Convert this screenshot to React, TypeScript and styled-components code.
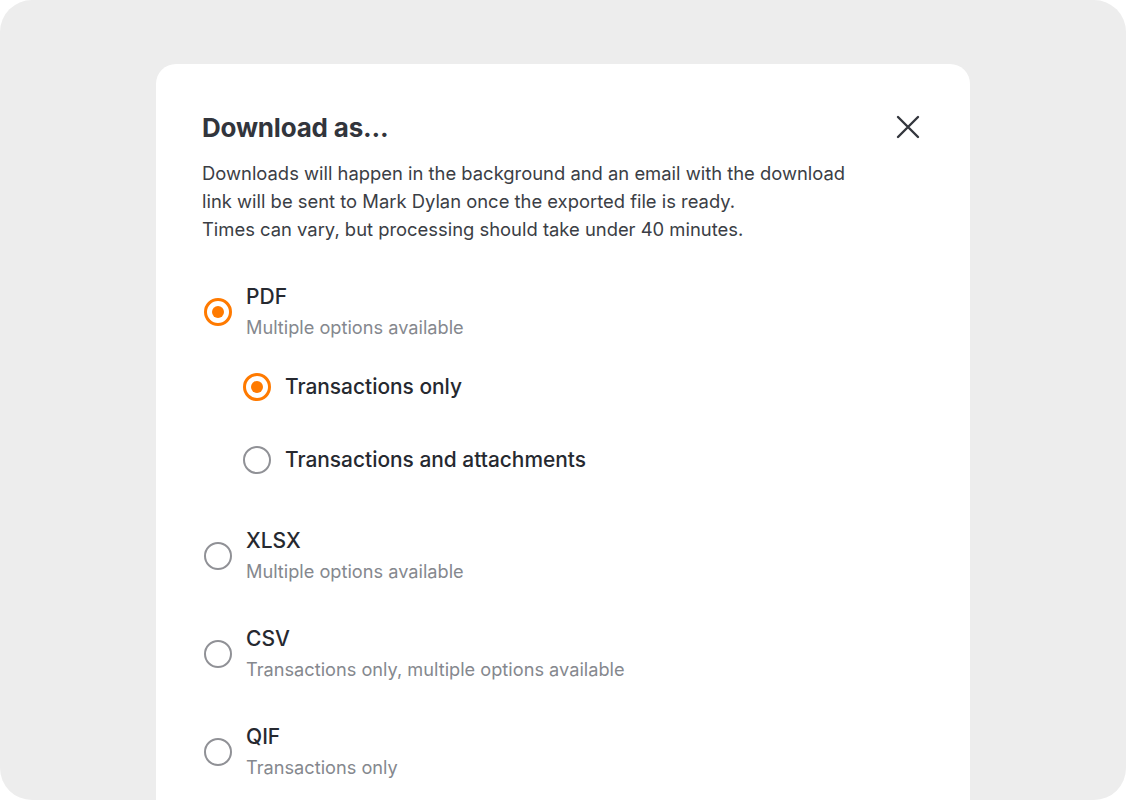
import React from "react";
import styled, { createGlobalStyle } from "styled-components";

const Global = createGlobalStyle`
  html, body { margin: 0; padding: 0; background: #ffffff; }
  body { font-family: Inter, "Noto Sans", sans-serif; }
  * { box-sizing: border-box; }
`;

const Frame = styled.div`
  width: 1126px;
  height: 800px;
  background: #ededed;
  border-radius: 32px;
  overflow: hidden;
  display: flex;
  justify-content: center;
  padding-top: 64px;
`;

const Card = styled.div`
  width: 814px;
  min-height: 800px;
  background: #ffffff;
  border-radius: 20px;
  padding: 44px 46px 0 46px;
  display: flex;
  flex-direction: column;
`;

const Header = styled.div`
  display: flex;
  justify-content: space-between;
  align-items: center;
  height: 38px;
`;

const Title = styled.h2`
  margin: 0;
  font-size: 26px;
  font-weight: 700;
  color: #32353c;
  letter-spacing: -0.2px;
`;

const CloseButton = styled.button`
  border: none;
  background: none;
  padding: 0;
  width: 32px;
  height: 32px;
  display: flex;
  align-items: center;
  justify-content: center;
  cursor: pointer;
`;

const Description = styled.p`
  margin: 13px 0 0 0;
  font-size: 18.4px;
  line-height: 28px;
  color: #3b3e45;
  max-width: 700px;
`;

const Options = styled.div`
  display: flex;
  flex-direction: column;
  margin-top: 40px;
`;

const OptionRow = styled.label<{ $gapBelow: number }>`
  display: flex;
  align-items: center;
  gap: 14px;
  margin-bottom: ${(p) => p.$gapBelow}px;
  margin-left: 2px;
`;

const RadioCircle = styled.span<{ $checked: boolean }>`
  width: 28px;
  height: 28px;
  border-radius: 50%;
  flex-shrink: 0;
  border: ${(p) => (p.$checked ? "3px solid #ff7a00" : "2px solid #909196")};
  display: flex;
  align-items: center;
  justify-content: center;
  &::after {
    content: "";
    display: ${(p) => (p.$checked ? "block" : "none")};
    width: 12px;
    height: 12px;
    border-radius: 50%;
    background: #ff7a00;
  }
`;

const TextBlock = styled.div`
  display: flex;
  flex-direction: column;
`;

const OptionLabel = styled.span`
  font-size: 21px;
  line-height: 28px;
  color: #262930;
  font-weight: 450;
`;

const OptionHint = styled.span`
  font-size: 18.2px;
  line-height: 26px;
  margin-top: 3px;
  color: #85888e;
`;

const SubOptions = styled.div`
  display: flex;
  flex-direction: column;
  gap: 45px;
  margin: 3px 0 53px 41px;
`;

const SubRow = styled.label`
  display: flex;
  align-items: center;
  gap: 14px;
`;

const SubLabel = styled.span`
  font-size: 20.9px;
  line-height: 28px;
  color: #262930;
  font-weight: 500;
`;

const CloseIcon = () => (
  <svg width="24" height="24" viewBox="0 0 24 24" fill="none">
    <path d="M2 2L22 22M22 2L2 22" stroke="#33363d" strokeWidth="2.4" strokeLinecap="round" />
  </svg>
);

type Opt = { label: string; hint: string; checked: boolean };

const opts: Opt[] = [
  { label: "XLSX", hint: "Multiple options available", checked: false },
  { label: "CSV", hint: "Transactions only, multiple options available", checked: false },
  { label: "QIF", hint: "Transactions only", checked: false },
];

export default function App() {
  return (
    <>
      <Global />
      <Frame>
        <Card>
          <Header>
            <Title>Download as...</Title>
            <CloseButton aria-label="Close">
              <CloseIcon />
            </CloseButton>
          </Header>
          <Description>
            Downloads will happen in the background and an email with the download
            <br />
            link will be sent to Mark Dylan once the exported file is ready.
            <br />
            Times can vary, but processing should take under 40 minutes.
          </Description>
          <Options>
            <OptionRow $gapBelow={30}>
              <RadioCircle $checked />
              <TextBlock>
                <OptionLabel>PDF</OptionLabel>
                <OptionHint>Multiple options available</OptionHint>
              </TextBlock>
            </OptionRow>
            <SubOptions>
              <SubRow>
                <RadioCircle $checked />
                <SubLabel>Transactions only</SubLabel>
              </SubRow>
              <SubRow>
                <RadioCircle $checked={false} />
                <SubLabel>Transactions and attachments</SubLabel>
              </SubRow>
            </SubOptions>
            {opts.map((o) => (
              <OptionRow key={o.label} $gapBelow={41}>
                <RadioCircle $checked={o.checked} />
                <TextBlock>
                  <OptionLabel>{o.label}</OptionLabel>
                  <OptionHint>{o.hint}</OptionHint>
                </TextBlock>
              </OptionRow>
            ))}
          </Options>
        </Card>
      </Frame>
    </>
  );
}
